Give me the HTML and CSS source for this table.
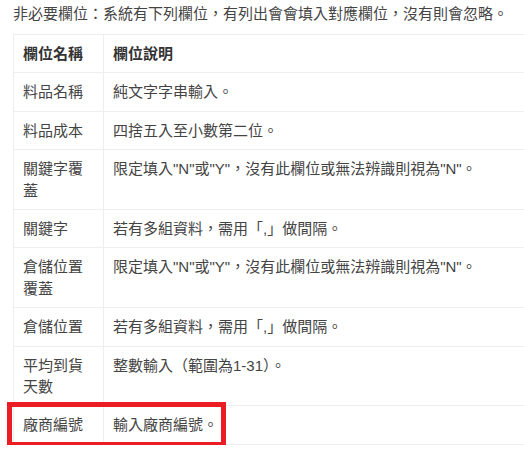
FILE: index.html
```html
<!DOCTYPE html>
<html lang="zh-Hant">
<head>
<meta charset="utf-8">
<title>非必要欄位</title>
<link rel="stylesheet" href="styles.css">
</head>
<body>
<div class="page">
  <p class="intro">非必要欄位：系統有下列欄位，有列出會會填入對應欄位，沒有則會忽略。</p>
  <table class="fields">
    <colgroup><col class="col-name"><col class="col-desc"></colgroup>
    <thead>
      <tr><th>欄位名稱</th><th>欄位說明</th></tr>
    </thead>
    <tbody>
      <tr><td>料品名稱</td><td>純文字字串輸入。</td></tr>
      <tr><td>料品成本</td><td>四捨五入至小數第二位。</td></tr>
      <tr><td>關鍵字覆蓋</td><td>限定填入"N"或"Y"，沒有此欄位或無法辨識則視為"N"。</td></tr>
      <tr><td>關鍵字</td><td>若有多組資料，需用「,」做間隔。</td></tr>
      <tr><td>倉儲位置覆蓋</td><td>限定填入"N"或"Y"，沒有此欄位或無法辨識則視為"N"。</td></tr>
      <tr><td>倉儲位置</td><td>若有多組資料，需用「,」做間隔。</td></tr>
      <tr><td>平均到貨天數</td><td>整數輸入（範圍為1-31）。</td></tr>
      <tr><td>廠商編號</td><td>輸入廠商編號。</td></tr>
    </tbody>
  </table>
  <div class="highlight"></div>
</div>
</body>
</html>
```
FILE: styles.css
```css
html, body {
  margin: 0;
  padding: 0;
  background: #fff;
  overflow: hidden;
}
body {
  font-family: "Liberation Sans", "Noto Sans CJK TC", sans-serif;
  font-size: 15px;
  color: #444;
}
.page {
  position: relative;
  padding: 3px 0 0 13px;
}
.intro {
  margin: 0 0 9px;
  line-height: 22px;
}
.fields {
  border-collapse: collapse;
  width: 511px;
  table-layout: fixed;
}
.col-name { width: 90px; }
.fields th,
.fields td {
  border: 1px solid #eee;
  padding: 8px 9px;
  line-height: 21.4px;
  text-align: left;
  vertical-align: top;
}
.fields th:last-child,
.fields td:last-child {
  border-right: none;
}
.fields th {
  font-weight: bold;
  color: #333;
}
.highlight {
  position: absolute;
  left: 7px;
  top: 402px;
  width: 209px;
  height: 35px;
  border: 5px solid #ec1c24;
}
```
